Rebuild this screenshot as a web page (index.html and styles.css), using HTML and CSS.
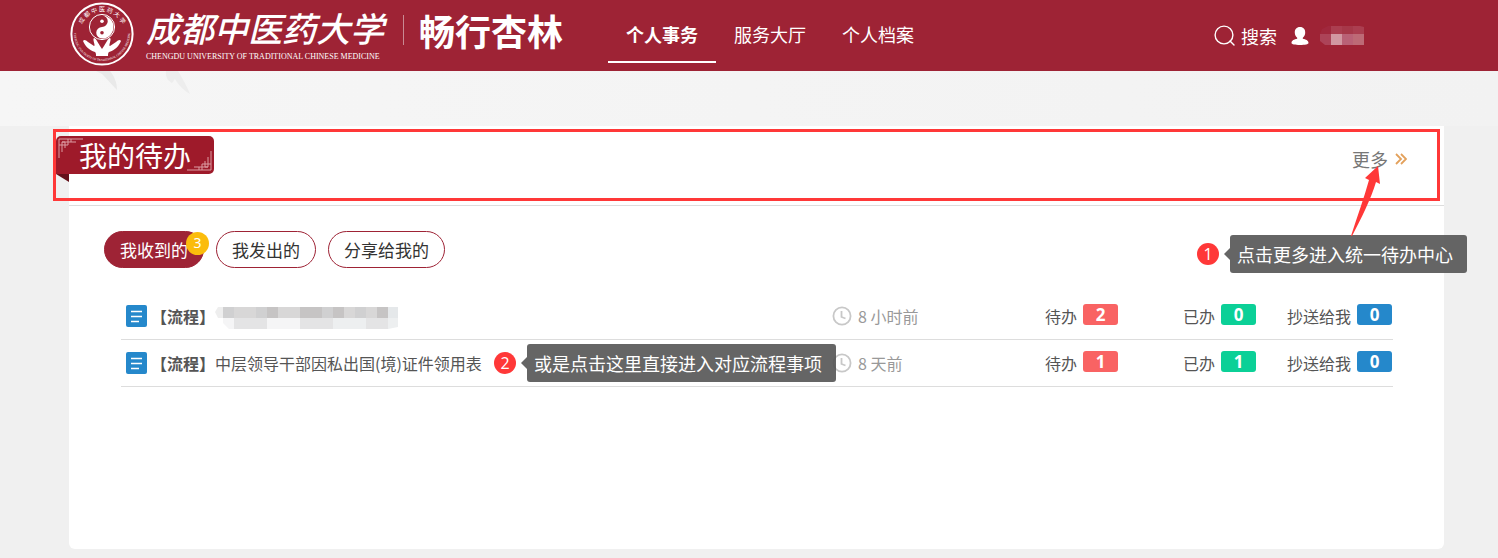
FILE: index.html
```html
<!DOCTYPE html>
<html lang="zh-CN">
<head>
  <meta charset="UTF-8" />
  <meta name="viewport" content="width=device-width, initial-scale=1.0" />
  <title>畅行杏林</title>
  <link rel="stylesheet" href="styles.css">
</head>
<body>
  <header class="header">
    <a class="logo" href="#">
      <svg class="seal" viewBox="0 0 64 64" aria-hidden="true">
        <defs>
          <path id="ringTop" d="M11 38 A22 22 0 1 1 53 38" />
          <path id="ringBottom" d="M4 31 A28 28 0 0 0 60 31" />
        </defs>
        <circle cx="32" cy="32" r="30.6" fill="none" stroke="#fff" stroke-width="2" />
        <text class="seal-cn" text-anchor="middle"><textPath href="#ringTop" startOffset="50%">成&nbsp;都&nbsp;中&nbsp;医&nbsp;药&nbsp;大&nbsp;学</textPath></text>
        <text class="seal-en" text-anchor="middle"><textPath href="#ringBottom" startOffset="50%">CHENGDU UNIVERSITY OF TRADITIONAL CHINESE MEDICINE</textPath></text>
        <circle cx="32" cy="25" r="12.6" fill="none" stroke="#fff" stroke-width="1" />
        <path d="M32 13.5A11.5 11.5 0 0 1 32 36.5A5.75 5.75 0 0 1 32 25A5.75 5.75 0 0 0 32 13.5Z" fill="#fff" />
        <circle cx="32" cy="19.2" r="1.8" fill="#fff" />
        <circle cx="32" cy="30.8" r="1.8" fill="#9e2335" />
        <path d="M13 39c1-2 3-1 5 1l6 4c2 0-2-7 0-8 2 0 4 5 6 8l2 3 2-3c2-3 4-8 6-8 2 1-2 8 0 8l6-4c2-2 4-3 5-1-2 5-6 9-12 11-1 1-1 2-1 4H26c0-2 0-3-1-4-6-2-10-6-12-11z" fill="#fff" />
      </svg>
      <span class="logo-name">
        <span class="school-cn">成都中医药大学</span>
        <span class="school-en">CHENGDU UNIVERSITY OF TRADITIONAL CHINESE MEDICINE</span>
      </span>
      <span class="logo-slogan">畅行杏林</span>
    </a>
    <nav class="nav">
      <a class="nav-item active" href="#">个人事务</a>
      <a class="nav-item" href="#">服务大厅</a>
      <a class="nav-item" href="#">个人档案</a>
    </nav>
    <div class="tools">
      <a class="search" href="#">
        <svg class="search-icon" viewBox="0 0 22 22" aria-hidden="true">
          <circle cx="10" cy="10" r="8.9" fill="none" stroke="#fff" stroke-width="1.4" />
          <path d="M16 16l4 4" stroke="#fff" stroke-width="1.4" stroke-linecap="round" />
        </svg>
        搜索
      </a>
      <a class="user" href="#" aria-label="用户">
        <svg class="user-icon" viewBox="0 0 18 18" aria-hidden="true">
          <path d="M9 0c3.5 0 5.5 2.5 5.2 6-.2 2-1 3.5-2.4 4.8v1c3 .6 5.700 1.600 5.700 4.200 0 1.300-3.500 2-8.500 2S.5 17.300.5 16c0-2.600 2.700-3.600 5.700-4.200v-1C4.800 9.500 4 8 3.800 6 3.500 2.500 5.500 0 9 0z" fill="#fff" />
        </svg>
        <svg class="user-name" viewBox="0 0 44 19" aria-hidden="true">
          <path d="M2 3l6-3h3v8H0z" fill="#a0283d" />
          <path d="M0 8h11v11H5l-5-4z" fill="#ac4358" />
          <path d="M11 0h11v8H11zM33 0h7l4 1v7H33z" fill="#ab3e50" />
          <path d="M22 0h11v8H22z" fill="#a63849" />
          <path d="M11 8h11v11H11z" fill="#d197a1" />
          <path d="M22 8h11v11H22z" fill="#b96176" />
          <path d="M33 8h11v11H33z" fill="#bd6a76" />
        </svg>
      </a>
    </div>
  </header>

  <div class="banner">
    <svg class="leaves" viewBox="0 0 100 24" aria-hidden="true">
      <path d="M0 0h14c4 5 7 11 7 19C15 13 10 7 6 3z" fill="#e9e9e9" />
      <path d="M70 0h12c4 7 8 13 12 23-8-5-12-10-15-15l-3 4c-3-2-7-5-6-12z" fill="#ededed" />
    </svg>
  </div>

  <main class="card">
    <div class="card-head">
      <h1 class="ribbon">
        我的待办
        <svg class="corner corner-top" viewBox="0 0 26 22" aria-hidden="true">
          <path d="M1 21V2h24M4 15V5h14M1 8h9V2M7 11V8M13 2v3M4 5h3v3" fill="none" stroke="#dc9ca2" />
        </svg>
        <svg class="corner corner-bottom" viewBox="0 0 26 22" aria-hidden="true">
          <path d="M1 21V2h24M4 15V5h14M1 8h9V2M7 11V8M13 2v3M4 5h3v3" fill="none" stroke="#dc9ca2" />
        </svg>
      </h1>
      <a class="more" href="#">
        更多
        <svg class="more-icon" viewBox="0 0 12 12" aria-hidden="true">
          <path d="M1 1l5 5-5 5M6 1l5 5-5 5" fill="none" stroke="#e3a15c" stroke-width="1.8" />
        </svg>
      </a>
      <div class="frame"></div>
    </div>

    <div class="tabs">
      <button class="tab active" type="button">我收到的<span class="tab-count">3</span></button>
      <button class="tab" type="button">我发出的</button>
      <button class="tab" type="button">分享给我的</button>
    </div>

    <ul class="list">
      <li class="row">
        <a class="title" href="#">
          <svg class="doc-icon" viewBox="0 0 21 22" aria-hidden="true">
            <rect width="21" height="22" rx="2" fill="#2588cb" />
            <path d="M5 6.5h11M5 11.5h11M5 16.5h8" stroke="#fff" stroke-width="1.4" />
          </svg>
          <span class="title-text"><b>【流程】</b></span>
          <svg class="masked" viewBox="0 0 183 22" aria-hidden="true">
            <path d="M0 5l3-5h5v11H3z" fill="#eee" />
            <path d="M8 0h11v11H8zM41 0h11v11H41zM107 0h11v11h-11zM140 0h11v11h-11z" fill="#d0d0d1" />
            <path d="M19 0h22v11H19zM63 0h22v11H63zM129 0h11v11h-11zM151 0h11v11h-11z" fill="#d8d7d7" />
            <path d="M52 0h11v11H52zM85 0h22v11H85zM118 0h11v11h-11zM162 0h11v11h-11z" fill="#c6c4c4" />
            <path d="M173 0h10v11h-10z" fill="#e5e8ea" />
            <path d="M8 11h11v11h-5l-6-6zM52 11h33v11H52z" fill="#f5f5f6" />
            <path d="M19 11h33v11H19zM85 11h33v11H85zM151 11h22v11h-22z" fill="#e4e4e5" />
            <path d="M118 11h33v11h-33zM173 11h10v9l-10 2z" fill="#edeff0" />
          </svg>
        </a>
        <span class="time">
          <svg class="clock" viewBox="0 0 20 20" aria-hidden="true">
            <circle cx="10" cy="10" r="8.6" fill="none" stroke="#c8c8c8" stroke-width="1.8" />
            <path d="M9.5 5v6l4 1.500" fill="none" stroke="#c8c8c8" stroke-width="1.8" />
          </svg>
          8 小时前
        </span>
        <span class="stat">待办<b class="num red">2</b></span>
        <span class="stat">已办<b class="num green">0</b></span>
        <span class="stat">抄送给我<b class="num blue">0</b></span>
      </li>
      <li class="row">
        <a class="title" href="#">
          <svg class="doc-icon" viewBox="0 0 21 22" aria-hidden="true">
            <rect width="21" height="22" rx="2" fill="#2588cb" />
            <path d="M5 6.5h11M5 11.5h11M5 16.5h8" stroke="#fff" stroke-width="1.4" />
          </svg>
          <span class="title-text"><b>【流程】</b>中层领导干部因私出国(境)证件领用表</span>
        </a>
        <span class="time">
          <svg class="clock" viewBox="0 0 20 20" aria-hidden="true">
            <circle cx="10" cy="10" r="8.6" fill="none" stroke="#c8c8c8" stroke-width="1.8" />
            <path d="M9.5 5v6l4 1.5" fill="none" stroke="#c8c8c8" stroke-width="1.8" />
          </svg>
          8 天前
        </span>
        <span class="stat">待办<b class="num red">1</b></span>
        <span class="stat">已办<b class="num green">1</b></span>
        <span class="stat">抄送给我<b class="num blue">0</b></span>
        <div class="note note-row">
          <span class="step">2</span>
          <span class="tip">或是点击这里直接进入对应流程事项</span>
        </div>
      </li>
    </ul>

    <div class="note note-more">
      <span class="step">1</span>
      <span class="tip">点击更多进入统一待办中心</span>
    </div>
    <svg class="arrow" viewBox="0 0 30 70" aria-hidden="true">
      <path d="M27 0l2 18-4-2C20 33 10 53 1 70h-1C6 51 13 32 18 14l-4-2z" fill="#ff3838" />
    </svg>
  </main>
</body>
</html>
```

FILE: styles.css
```css
* {
  box-sizing: border-box;
}

body {
  margin: 0;
  background: #f0f0f0;
  font-family: "Noto Sans CJK SC", sans-serif;
  font-size: 16px;
  color: #555;
}

a {
  color: inherit;
  text-decoration: none;
}

svg {
  display: block;
  flex: none;
}

/* header */
.header {
  display: flex;
  align-items: center;
  height: 71px;
  padding: 0 134px 0 70px;
  background: #9e2335;
  color: #fff;
}

.logo {
  display: flex;
  align-items: center;
  margin-bottom: 4px;
}

.seal {
  width: 64px;
  height: 64px;
  margin-right: 12px;
}

.seal-cn {
  font-size: 6px;
  fill: #fff;
}

.seal-en {
  font-family: "Liberation Serif", serif;
  font-size: 3px;
  fill: #fff;
}

.logo-name {
  display: flex;
  flex-direction: column;
  padding-right: 19px;
}

.school-cn {
  font-size: 34px;
  font-style: italic;
  font-weight: 500;
  line-height: 46px;
}

.school-en {
  font-family: "Liberation Serif", serif;
  font-size: 8px;
  line-height: 12px;
  white-space: nowrap;
}

.logo-slogan {
  padding-left: 15px;
  margin-bottom: 8px;
  border-left: 1px solid #c98a93;
  font-size: 36px;
  font-weight: bold;
  line-height: 30px;
}

.nav {
  display: flex;
  align-self: stretch;
  margin-left: 45px;
}

.nav-item {
  height: 63px;
  padding: 0 18px;
  font-size: 18px;
  line-height: 68px;
}

.nav-item.active {
  border-bottom: 2px solid #fff;
  font-weight: bold;
}

.tools {
  display: flex;
  align-items: center;
  margin-left: auto;
  font-size: 18px;
}

.search,
.user {
  display: flex;
  align-items: center;
}

.search-icon {
  width: 22px;
  height: 22px;
  margin-right: 5px;
}

.user {
  margin-left: 14px;
}

.user-icon {
  width: 18px;
  height: 18px;
  margin-right: 11px;
}

.user-name {
  width: 44px;
  height: 19px;
}

/* banner */
.banner {
  height: 55px;
  padding-left: 96px;
  background: linear-gradient(to right, #f6f6f6, #f2f2f2);
}

.leaves {
  width: 100px;
  height: 24px;
}

/* card */
.card {
  position: relative;
  min-height: 423px;
  margin: 0 54px 9px 69px;
  background: #fff;
  border-radius: 0 0 6px 6px;
}

.card-head {
  position: relative;
  display: flex;
  justify-content: space-between;
  align-items: flex-start;
  height: 80px;
  padding: 10px 37px 0 0;
  border-bottom: 1px solid #ddd;
}

.ribbon {
  position: relative;
  width: 158px;
  height: 38px;
  margin: 0 0 0 -13px;
  padding-left: 23px;
  background: #9e1a2a;
  border-radius: 5px;
  border-bottom-left-radius: 0;
  color: #fff;
  font-size: 28px;
  font-weight: normal;
  line-height: 38px;
}

.ribbon::after {
  content: "";
  position: absolute;
  top: 38px;
  left: 0;
  border-top: 8px solid #65101a;
  border-left: 13px solid transparent;
}

.corner {
  position: absolute;
  width: 26px;
  height: 22px;
}

.corner-top {
  top: 1px;
  left: 2px;
}

.corner-bottom {
  right: 2px;
  bottom: 2px;
  transform: rotate(180deg);
}

.more {
  display: flex;
  align-items: center;
  gap: 7px;
  color: #777;
  font-size: 18px;
  line-height: 46px;
}

.more-icon {
  width: 12px;
  height: 12px;
}

.frame {
  position: absolute;
  top: 3px;
  right: 4px;
  left: -16px;
  height: 72px;
  border: 3px solid #ff3838;
  pointer-events: none;
}

/* tabs */
.tabs {
  display: flex;
  gap: 12px;
  padding: 25px 35px;
}

.tab {
  position: relative;
  height: 37px;
  padding: 0 15px;
  background: #fff;
  border: 1px solid #9e2335;
  border-radius: 19px;
  color: #333;
  font-family: inherit;
  font-size: 17px;
  cursor: pointer;
}

.tab.active {
  background: #9e2335;
  color: #fff;
}

.tab-count {
  position: absolute;
  top: 0;
  right: -6px;
  width: 23px;
  height: 23px;
  background: #fbbc0c;
  border-radius: 50%;
  font-family: "Noto Sans", sans-serif;
  font-size: 14px;
  line-height: 22px;
}

/* list */
.list {
  margin: 0 51px 0 52px;
  padding: 0;
  list-style: none;
}

.row {
  position: relative;
  display: grid;
  grid-template-columns: minmax(0, 1fr) 213px 138px 104px 106px;
  align-items: center;
  height: 47px;
  border-bottom: 1px solid #ddd;
}

.title,
.time,
.stat {
  display: flex;
  align-items: center;
  white-space: nowrap;
}

.title {
  padding-left: 5px;
}

.doc-icon {
  width: 21px;
  height: 22px;
  margin-right: 4px;
}

.masked {
  width: 183px;
  height: 22px;
  margin-top: 4px;
}

.time {
  gap: 6px;
  color: #999;
}

.clock {
  width: 20px;
  height: 20px;
}

.stat {
  gap: 6px;
}

.num {
  width: 35px;
  height: 21px;
  margin-bottom: 4px;
  border-radius: 3px;
  color: #fff;
  font-family: "Open Sans", sans-serif;
  font-size: 17px;
  line-height: 21px;
  text-align: center;
}

.red {
  background: #f96363;
}

.green {
  background: #0bd097;
}

.blue {
  background: #2588cb;
}

/* step notes */
.note {
  position: absolute;
  display: flex;
  align-items: center;
  gap: 11px;
  white-space: nowrap;
}

.note-row {
  top: 4px;
  left: 373px;
}

.note-more {
  top: 109px;
  right: -23px;
}

.step {
  width: 22px;
  height: 22px;
  background: #ff3838;
  border-radius: 50%;
  color: #fff;
  font-family: "Open Sans", sans-serif;
  font-size: 16px;
  line-height: 22px;
  text-align: center;
}

.tip {
  position: relative;
  padding: 0 14px 0 7px;
  background: rgba(80, 80, 80, 0.88);
  border-radius: 3px;
  color: #fff;
  font-size: 18px;
  line-height: 38px;
}

.tip::before {
  content: "";
  position: absolute;
  top: 13px;
  left: -6px;
  border: 6px solid transparent;
  border-right-color: rgba(80, 80, 80, 0.88);
  border-left: 0;
}

.arrow {
  position: absolute;
  top: 40px;
  right: 63px;
  width: 30px;
  height: 70px;
}
```
